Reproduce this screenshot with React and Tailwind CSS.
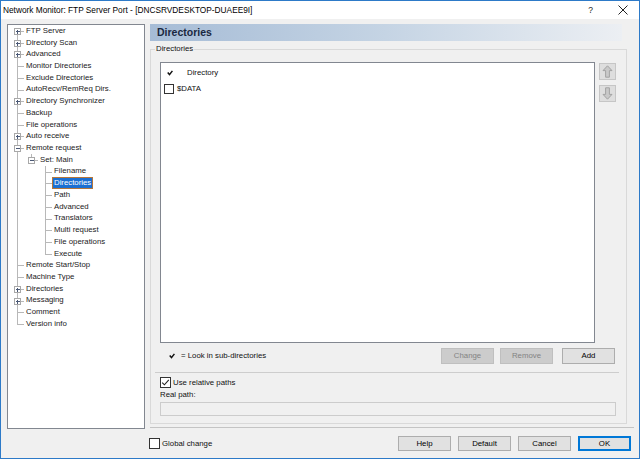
import React from 'react';

const H = 11.72;

const tree = [
  { t: 'FTP Server', l: 0, e: '+', first: true },
  { t: 'Directory Scan', l: 0, e: '+' },
  { t: 'Advanced', l: 0, e: '+' },
  { t: 'Monitor Directories', l: 0 },
  { t: 'Exclude Directories', l: 0 },
  { t: 'AutoRecv/RemReq Dirs.', l: 0 },
  { t: 'Directory Synchronizer', l: 0, e: '+' },
  { t: 'Backup', l: 0 },
  { t: 'File operations', l: 0 },
  { t: 'Auto receive', l: 0, e: '+' },
  { t: 'Remote request', l: 0, e: '-' },
  { t: 'Set: Main', l: 1, e: '-', last: true, anc: [true] },
  { t: 'Filename', l: 2, anc: [true, false] },
  { t: 'Directories', l: 2, anc: [true, false], sel: true },
  { t: 'Path', l: 2, anc: [true, false] },
  { t: 'Advanced', l: 2, anc: [true, false] },
  { t: 'Translators', l: 2, anc: [true, false] },
  { t: 'Multi request', l: 2, anc: [true, false] },
  { t: 'File operations', l: 2, anc: [true, false] },
  { t: 'Execute', l: 2, anc: [true, false], last: true },
  { t: 'Remote Start/Stop', l: 0 },
  { t: 'Machine Type', l: 0 },
  { t: 'Directories', l: 0, e: '+' },
  { t: 'Messaging', l: 0, e: '+' },
  { t: 'Comment', l: 0 },
  { t: 'Version info', l: 0, last: true },
];

function TreeRow({ item }) {
  const { t, l, e, last, first, anc = [], sel } = item;
  const w = 16 + 14 * l;
  const mid = 6.5;
  const x = 9.5 + 14 * l;
  return (
    <div className="flex items-center h-[11.72px]">
      <svg width={w} height={H} className="shrink-0" shapeRendering="crispEdges">
        <g stroke="#b8b8b8" strokeWidth="1">
          {anc.map((c, i) =>
            c ? <line key={i} x1={9.5 + 14 * i} x2={9.5 + 14 * i} y1={0} y2={H} /> : null
          )}
          <line x1={x} x2={x} y1={first ? mid : 0} y2={last ? mid : H} />
          <line x1={x} x2={w} y1={mid} y2={mid} />
        </g>
        {e && (
          <g>
            <rect x={x - 3} y={mid - 3} width="6" height="6" fill="#ffffff" stroke="#a8a8a8" />
            <line x1={x - 2} x2={x + 2} y1={mid} y2={mid} stroke="#4a5875" />
            {e === '+' && <line x1={x} x2={x} y1={mid - 2} y2={mid + 2} stroke="#4a5875" />}
          </g>
        )}
      </svg>
      <span
        className={
          sel
            ? 'px-[1px] border border-[#b5773c] bg-[#1b6fd2] text-white leading-[10px] whitespace-nowrap'
            : 'px-[1px] border border-transparent leading-[10px] whitespace-nowrap'
        }
      >
        {t}
      </span>
    </div>
  );
}

function Check({ checked }) {
  return (
    <div className="w-[11px] h-[11px] border border-[#333333] bg-white shrink-0 flex items-center justify-center">
      {checked && (
        <svg width="9" height="9" viewBox="0 0 9 9">
          <path d="M1.2 4.6 L3.4 6.8 L7.8 1.8" fill="none" stroke="#222222" strokeWidth="1.1" />
        </svg>
      )}
    </div>
  );
}

function TickMark() {
  return (
    <svg width="6" height="6" viewBox="0 0 6 6" className="shrink-0">
      <path d="M0.7 2.6 L2.5 4.6 L5.4 0.9" fill="none" stroke="#111111" strokeWidth="1.5" />
    </svg>
  );
}

function Arrow({ down }) {
  return (
    <div className="w-[17px] h-[17px] bg-[#dedede] border border-[#c6c6c6] flex items-center justify-center">
      <svg width="11" height="13" viewBox="0 0 11 13" className={down ? 'rotate-180' : ''}>
        <path d="M5.5 0.8 L10 5.6 L7.4 5.6 L7.4 12.2 L3.6 12.2 L3.6 5.6 L1 5.6 Z" fill="#c9c9c9" stroke="#a3a3a3" strokeWidth="1" />
      </svg>
    </div>
  );
}

function Btn({ children, disabled, def, className = '' }) {
  const base = 'h-full flex items-center justify-center leading-none ';
  const look = disabled
    ? 'bg-[#cccccc] border border-[#bfbfbf] text-[#838383] '
    : def
    ? 'bg-[#e1e1e1] border-2 border-[#0078d7] text-black '
    : 'bg-[#e1e1e1] border border-[#adadad] text-black ';
  return <div className={base + look + 'w-[53px] ' + className}>{children}</div>;
}

export default function App() {
  return (
    <div className="w-[640px] h-[459px] border border-[#2d7ac8] flex flex-col bg-[#f0f0f0] text-[7.8px] text-[#111111] font-['Liberation_Sans',Arial,sans-serif] overflow-hidden">
      {/* Title bar */}
      <div className="h-[18px] bg-white flex items-center pl-[2px] shrink-0">
        <span className="text-[8.3px] leading-none whitespace-nowrap text-black">
          Network Monitor: FTP Server Port - [DNCSRVDESKTOP-DUAEE9I]
        </span>
        <div className="ml-auto flex items-center pr-[11px]">
          <span className="text-[8.5px] leading-none mr-[25px] text-[#222222]">?</span>
          <svg width="10" height="10" viewBox="0 0 10 10">
            <path d="M0.5 0.5 L9.5 9.5 M9.5 0.5 L0.5 9.5" stroke="#222222" strokeWidth="1" />
          </svg>
        </div>
      </div>

      {/* Body */}
      <div className="flex-1 flex pl-[6px] pt-[5px]">
        {/* Tree */}
        <div className="w-[138px] h-[405px] border border-[#828790] bg-white shrink-0 text-[#1a1a1a]">
          {tree.map((it, i) => (
            <TreeRow key={i} item={it} />
          ))}
        </div>

        {/* Right pane */}
        <div className="ml-[5px] w-[484px] flex flex-col">
          <div className="h-[17px] w-[472px] bg-linear-to-r from-[#a6bcd6] via-[#c5d4e4] to-[#eceff3] flex items-center pl-[7px]">
            <span className="font-bold text-[10.5px] leading-none text-[#1a2841]">Directories</span>
          </div>

          {/* Group box */}
          <div className="mt-[8px] w-[477px] h-[375px] border border-[#d9d9d9] relative flex flex-col pl-[9px] pt-[12px]">
            <span className="absolute -top-[6px] left-[4px] px-[1px] bg-[#f0f0f0] leading-[10px]">Directories</span>

            <div className="flex">
              <div className="w-[435px] h-[281px] border border-[#828790] bg-white flex flex-col">
                <div className="h-[12px] mt-[4px] flex items-center">
                  <span className="ml-[6px]"><TickMark /></span>
                  <span className="ml-[14px] leading-none">Directory</span>
                </div>
                <div className="h-[12px] mt-[4px] flex items-center">
                  <span className="ml-[3px]">
                    <div className="w-[10px] h-[10px] border border-[#333333] bg-white" />
                  </span>
                  <span className="ml-[3px] leading-none">$DATA</span>
                </div>
              </div>
              <div className="ml-[4px] flex flex-col pt-[1px] gap-[5px]">
                <Arrow />
                <Arrow down />
              </div>
            </div>

            <div className="mt-[5px] h-[16px] flex items-center pr-[11px]">
              <span className="ml-[9px]"><TickMark /></span>
              <span className="ml-[6px] leading-none">= Look in sub-directories</span>
              <div className="ml-auto flex h-full">
                <Btn disabled className="mr-[6px]">Change</Btn>
                <Btn disabled className="mr-[9px]">Remove</Btn>
                <Btn>Add</Btn>
              </div>
            </div>

            <div className="mt-[8px] -ml-[5px] w-[464px] h-[1px] bg-[#cdcdcd]" />

            <div className="mt-[4px] h-[11px] flex items-center">
              <Check checked />
              <span className="ml-[2px] leading-none">Use relative paths</span>
            </div>
            <div className="mt-[1px] h-[11px] leading-[11px]">Real path:</div>
            <div className="mt-[2px] w-[456px] h-[14px] border border-[#cccccc] bg-[#f0f0f0]" />
          </div>

          <div className="mt-[3px] w-[484px] h-[1px] bg-[#c4c4c4]" />

          <div className="mt-[8px] h-[15px] flex items-center pr-[3px]">
            <div className="-ml-[1px] flex items-center">
              <Check />
              <span className="ml-[2px] leading-none">Global change</span>
            </div>
            <div className="ml-auto flex h-full gap-[7px]">
              <Btn>Help</Btn>
              <Btn>Default</Btn>
              <Btn>Cancel</Btn>
              <Btn def>OK</Btn>
            </div>
          </div>
        </div>
      </div>
    </div>
  );
}
